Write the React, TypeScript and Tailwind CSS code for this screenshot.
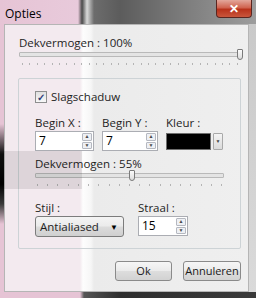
import React from 'react';

function Ticks({ count }: { count: number }) {
  return (
    <div className="flex h-[2px] justify-between">
      {Array.from({ length: count }).map((_, i) => (
        <div key={i} className="h-[2px] w-px bg-[#b4b4b4]" />
      ))}
    </div>
  );
}

function Slider({ pos }: { pos: number }) {
  return (
    <div className="relative h-[12px]">
      <div className="absolute left-0 right-0 top-[3px] h-[5px] rounded-[1px] border border-[#b9b9b9] bg-[#e4e4e4]" />
      <div
        className="absolute top-0 h-[11px] w-[6px] rounded-b-[3px] rounded-t-[1px] border border-[#7a7a7a] bg-[linear-gradient(#fbfbfb,#dcdcdc)]"
        style={{ left: pos }}
      />
    </div>
  );
}

function Spin({ value, width }: { value: string; width: string }) {
  return (
    <div className={`flex h-[20px] items-stretch border border-[#abadb3] bg-white ${width}`}>
      <div className="flex-1 pl-[3px] text-[12px] leading-[18px] text-black">{value}</div>
      <div className="my-[1px] mr-[1px] flex w-[10px] flex-col gap-px">
        <div className="flex flex-1 items-center justify-center rounded-[1px] border border-[#b5b8c0] bg-[#eef0f4] text-[5px] leading-none text-[#4a4a4a]">▲</div>
        <div className="flex flex-1 items-center justify-center rounded-[1px] border border-[#b5b8c0] bg-[#eef0f4] text-[5px] leading-none text-[#4a4a4a]">▼</div>
      </div>
    </div>
  );
}

function Btn({ children, width }: { children: React.ReactNode; width: string }) {
  return (
    <div className={`flex h-[20px] items-center justify-center rounded-[3px] border border-[#8a8a8a] bg-[linear-gradient(#f6f6f6_0%,#ebebeb_48%,#dddddd_52%,#d2d2d2_100%)] text-[11px] text-[#1a1a1a] ${width}`}>
      {children}
    </div>
  );
}

export default function App() {
  return (
    <div
      className="relative flex h-[298px] w-[256px] flex-col overflow-hidden bg-[linear-gradient(90deg,#e6c4d5_0px,#e8cadb_78px,#4a4a4a_82px,#d9d9d9_87px,#6c6c6c_94px,#5c5c5c_120px,#7f7f7f_190px,#9d9d9d_256px)] text-[11.5px] text-[#1e1e1e]"
      style={{ fontFamily: '"Open Sans", "Noto Sans", sans-serif' }}
    >
      {/* title bar */}
      <div className="flex h-[24px] items-start justify-between">
        <div className="pl-[5px] pt-[6px] text-[12px] leading-[16px] text-black">Opties</div>
        <div className="mr-[4px] flex h-[18px] w-[36px] items-center justify-center rounded-b-[4px] border border-t-0 border-[#5a2620] bg-[linear-gradient(#e3a79b_0%,#d0634f_45%,#b8321b_55%,#c9563c_100%)] text-[12px] font-bold leading-none text-white">
          ✕
        </div>
      </div>

      <div className="flex flex-1">
        {/* left frame */}
        <div className="w-[4px] bg-[linear-gradient(#e6c4d5_0px,#e6c4d5_100px,#111_130px,#000_160px,#3a3a3a_180px,#e6c4d5_200px,#e6c4d5_100%)]" />

        {/* client area */}
        <div className="flex h-[268px] w-[245px] flex-col border border-[#b5b5b5] bg-[linear-gradient(90deg,#f3eaef_0px,#f3eaef_75px,#fdfdfd_78px,#f6f6f6_86px,#ebebeb_89px,#efefef_100%)] pl-[13px] pr-[7px]">
          <div className="pl-[1px] pt-[10px] leading-[16px]">Dekvermogen : 100%</div>
          <div className="mt-[-2px] pl-[1px] pr-[1px]">
            <Slider pos={218} />
          </div>
          <div className="mt-[2px] pl-[4px] pr-[3px]">
            <Ticks count={30} />
          </div>

          {/* group box */}
          <div className="mt-[13px] flex h-[171px] flex-col rounded-[2px] border border-[#cdd3d6] pl-[16px] pr-[16px]">
            <div className="mt-[11px] flex h-[14px] items-center gap-[4px]">
              <div className="flex h-[12px] w-[12px] items-center justify-center border border-[#8e8f8f] bg-[linear-gradient(#e0e0e0,#f8f8f8)] text-[10px] font-bold leading-none text-[#31407a]">
                ✓
              </div>
              <span className="leading-[16px]">Slagschaduw</span>
            </div>

            <div className="mt-[11px] flex">
              <div className="w-[67px]">
                <div className="leading-[16px]">Begin X :</div>
                <Spin value="7" width="w-[59px]" />
              </div>
              <div className="w-[64px]">
                <div className="leading-[16px]">Begin Y :</div>
                <Spin value="7" width="w-[56px]" />
              </div>
              <div>
                <div className="leading-[16px]">Kleur :</div>
                <div className="mt-[2px] flex h-[17px] w-[58px] items-stretch gap-[2px]">
                  <div className="w-[45px] border border-[#6e6e6e] bg-black" />
                  <div className="flex w-[10px] items-center justify-center rounded-[1px] border border-[#a9a9a9] bg-[linear-gradient(#f4f4f4,#dadada)] text-[5px] leading-none text-[#444]">
                    ▼
                  </div>
                </div>
              </div>
            </div>

            <div className="mt-[5px] leading-[16px]">Dekvermogen : 55%</div>
            <div className="mt-[-2px]">
              <Slider pos={94} />
            </div>
            <div className="mt-[2px] pl-[2px] pr-[2px]">
              <Ticks count={19} />
            </div>

            <div className="mt-[14px] flex">
              <div className="w-[103px]">
                <div className="leading-[16px]">Stijl :</div>
                <div className="flex h-[21px] w-[89px] items-center justify-between rounded-[3px] border border-[#7c7c7c] bg-[linear-gradient(#f4f4f4_0%,#ebebeb_48%,#dcdcdc_52%,#cfcfcf_100%)] pl-[4px] pr-[5px]">
                  <span>Antialiased</span>
                  <span className="text-[8px] text-black">▼</span>
                </div>
              </div>
              <div>
                <div className="leading-[16px]">Straal :</div>
                <div className="h-[21px]">
                  <Spin value="15" width="w-[50px]" />
                </div>
              </div>
            </div>
          </div>

          {/* buttons */}
          <div className="mt-[12px] flex justify-end gap-[11px]">
            <Btn width="w-[57px]">Ok</Btn>
            <Btn width="w-[58px]">Annuleren</Btn>
          </div>
        </div>

        {/* right frame */}
        <div className="flex-1 bg-[linear-gradient(#c9c9c9,#dadada)]" />
      </div>

      {/* bottom frame */}
      <div className="h-[6px] bg-[linear-gradient(90deg,#e6c4d5_0px,#e6c4d5_80px,#555_84px,#2e2e2e_120px,#3a3a3a_100%)]" />

      {/* reflection band over the left side */}
      <div className="pointer-events-none absolute left-0 top-[151px] h-[38px] w-[82px] bg-[rgba(0,0,0,0.09)]" />
    </div>
  );
}
